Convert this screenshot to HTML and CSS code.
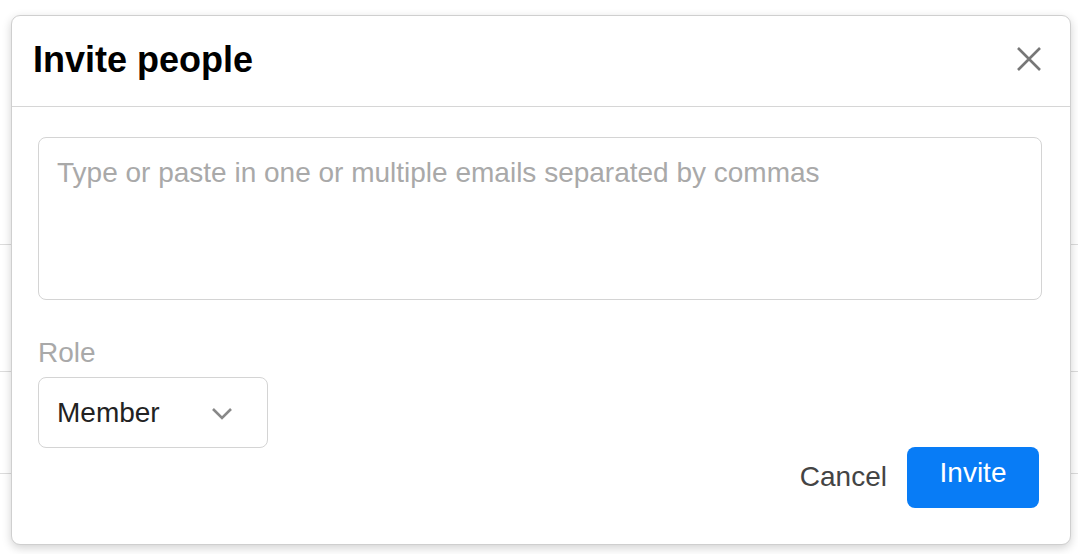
FILE: index.html
```html
<!DOCTYPE html>
<html lang="en">
<head>
<meta charset="utf-8">
<title>Invite people</title>
<link rel="stylesheet" href="styles.css">
</head>
<body>
<div class="page">
  <div class="row row-a"></div>
  <div class="row row-b"></div>
  <div class="row row-c"></div>
</div>
<div class="modal" role="dialog" aria-labelledby="modal-title">
  <header class="modal-header">
    <h1 id="modal-title" class="modal-title">Invite people</h1>
    <button class="close" aria-label="Close">
      <svg width="26" height="26" viewBox="0 0 26 26"><path d="M2 2 L24 24 M24 2 L2 24" stroke="#777" stroke-width="2.6" fill="none"/></svg>
    </button>
  </header>
  <div class="modal-body">
    <textarea class="emails" placeholder="Type or paste in one or multiple emails separated by commas"></textarea>
    <label class="role-label">Role</label>
    <button class="select">
      <span class="select-value">Member</span>
      <svg class="chevron" width="22" height="14" viewBox="0 0 22 14"><path d="M2 2 L11 11 L20 2" stroke="#888" stroke-width="2.6" fill="none"/></svg>
    </button>
    <div class="actions">
      <button class="btn-cancel">Cancel</button>
      <button class="btn-invite">Invite</button>
    </div>
  </div>
</div>
</body>
</html>
```

FILE: styles.css
```css
html, body {
  margin: 0;
  padding: 0;
  background: #fff;
  font-family: "Liberation Sans", Arial, Helvetica, sans-serif;
}

.page {
  height: 554px;
  overflow: hidden;
}

.row {
  border-bottom: 1px solid #dcdcdc;
}
.row-a { height: 244px; }
.row-b { height: 126px; }
.row-c { height: 101px; }

.modal {
  position: absolute;
  left: 11px;
  top: 15px;
  width: 1060px;
  height: 530px;
  box-sizing: border-box;
  background: #fff;
  border: 1px solid #cfcfcf;
  border-radius: 9px;
  box-shadow: 0 3px 10px rgba(0, 0, 0, 0.18);
  display: flex;
  flex-direction: column;
}

.modal-header {
  height: 91px;
  box-sizing: border-box;
  border-bottom: 1px solid #d6d6d6;
  display: flex;
  align-items: center;
  justify-content: space-between;
  padding: 0 28px 2px 21px;
}

.modal-title {
  margin: 0;
  font-size: 36px;
  font-weight: bold;
  color: #000;
}

.close {
  border: 0;
  background: none;
  padding: 0 0 2px;
  width: 26px;
  height: 28px;
  display: flex;
  cursor: pointer;
}

.modal-body {
  padding: 30px 28px 0 26px;
  display: flex;
  flex-direction: column;
  align-items: flex-start;
}

.emails {
  box-sizing: border-box;
  width: 1004px;
  height: 163px;
  border: 1px solid #d4d4d4;
  border-radius: 8px;
  padding: 19px 18px;
  margin: 0;
  resize: none;
  font-family: inherit;
  font-size: 28px;
  line-height: 32px;
  color: #222;
  outline: none;
}
.emails::placeholder {
  color: #a9a9a9;
}

.role-label {
  margin-top: 37px;
  font-size: 28px;
  line-height: 32px;
  color: #a9a9a9;
}

.select {
  margin-top: 8px;
  box-sizing: border-box;
  width: 230px;
  height: 71px;
  border: 1px solid #d4d4d4;
  border-radius: 8px;
  background: #fff;
  padding: 0 34px 0 18px;
  display: flex;
  align-items: center;
  justify-content: space-between;
  font-family: inherit;
  font-size: 28px;
  color: #222;
}

.chevron {
  margin-top: 2px;
}

.actions {
  align-self: stretch;
  display: flex;
  justify-content: flex-end;
  align-items: center;
  gap: 20px;
  margin-top: -1px;
  padding-right: 3px;
}

.btn-cancel {
  border: 0;
  background: none;
  padding: 0;
  font-family: inherit;
  font-size: 28px;
  color: #444;
  margin-top: -2px;
}

.btn-invite {
  width: 132px;
  height: 61px;
  border: 0;
  border-radius: 8px;
  background: #087cf6;
  color: #fff;
  font-family: inherit;
  font-size: 28px;
  padding: 0 0 9px;
}
```
